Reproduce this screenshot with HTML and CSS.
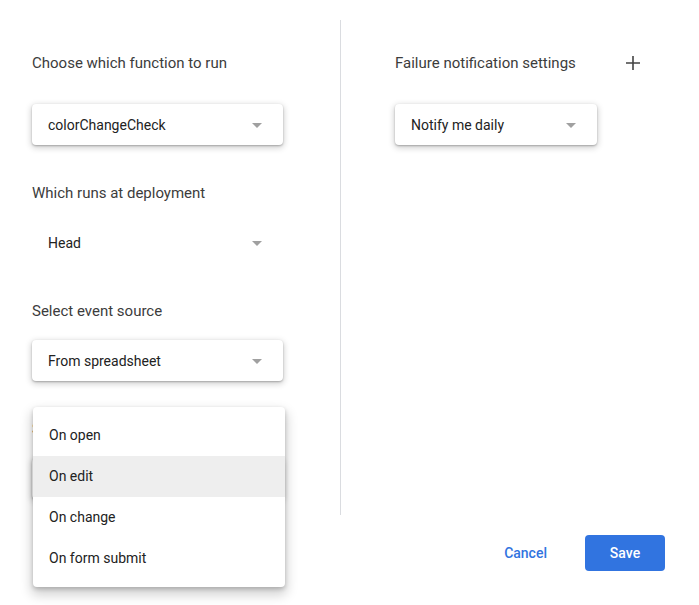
FILE: index.html
```html
<!DOCTYPE html>
<html lang="en">
<head>
  <meta charset="UTF-8">
  <title>Add Trigger</title>
  <link rel="stylesheet" href="styles.css">
</head>
<body>
  <div class="dialog">
    <div class="columns">
      <!-- Left column: function and event settings -->
      <div class="col col-left">
        <div class="header">
          <span class="field-label">Choose which function to run</span>
        </div>
        <div class="select raised">
          <span>colorChangeCheck</span>
          <span class="arrow"></span>
        </div>

        <div class="field-label spaced">Which runs at deployment</div>
        <div class="select">
          <span>Head</span>
          <span class="arrow"></span>
        </div>

        <div class="field-label spaced">Select event source</div>
        <div class="select raised">
          <span>From spreadsheet</span>
          <span class="arrow"></span>
        </div>

        <div class="field-label spaced">Select event type</div>
        <div class="select raised">
          <span>On edit</span>
          <span class="arrow"></span>
        </div>
      </div>

      <!-- Right column: notifications -->
      <div class="col col-right">
        <div class="header header-wide">
          <span class="field-label">Failure notification settings</span>
          <span class="plus">
            <svg width="14" height="14" viewBox="0 0 14 14"><path d="M7 0v14M0 7h14" stroke="#444" stroke-width="1.6"/></svg>
          </span>
        </div>
        <div class="select raised select-short">
          <span>Notify me daily</span>
          <span class="arrow"></span>
        </div>
      </div>
    </div>

    <div class="footer">
      <button class="btn btn-text">Cancel</button>
      <button class="btn btn-primary">Save</button>
    </div>

    <!-- Open dropdown menu for event type -->
    <ul class="menu">
      <li>On open</li>
      <li class="active">On edit</li>
      <li>On change</li>
      <li>On form submit</li>
    </ul>
  </div>
</body>
</html>
```

FILE: styles.css
```css
/* Variables */
:root {
  --text-color: #333;
  --label-color: #3c3c3c;
  --divider: #dadce0;
  --blue: #3174e0;
  --radius: 4px;
}

body {
  margin: 0;
  background: #fff;
  font-family: Roboto, 'Noto Sans', sans-serif;
  color: var(--text-color);
}

.dialog {
  position: relative;
  box-sizing: border-box;
  width: 699px;
  height: 605px;
  padding-top: 20px;
}

.columns {
  display: flex;
  height: 495px;
}

.col {
  box-sizing: border-box;
  padding-top: 23px;
}

.col-left {
  width: 341px;
  padding-left: 32px;
  border-right: 1px solid var(--divider);
}

.col-right {
  padding-left: 54px;
}

.header {
  height: 40px;
  display: flex;
  align-items: center;
  margin-bottom: 21px;
}

.header-wide {
  width: 245px;
  justify-content: space-between;
}

.field-label {
  font-size: 15px;
  line-height: 20px;
  color: var(--label-color);
}

.field-label.spaced {
  margin-top: 38px;
  margin-bottom: 19px;
}

.plus {
  display: flex;
  width: 14px;
  height: 14px;
}

/* Select boxes */
.select {
  box-sizing: border-box;
  width: 251px;
  height: 41px;
  display: flex;
  align-items: center;
  justify-content: space-between;
  padding: 0 21px 0 16px;
  font-size: 14px;
  color: #222;
  border-radius: var(--radius);
  background: #fff;
}

.select.raised {
  box-shadow: 0 1px 2px rgba(0, 0, 0, 0.25), 0 2px 6px 1px rgba(0, 0, 0, 0.18);
}

.select-short {
  width: 202px;
  padding-right: 21px;
}

.arrow {
  width: 0;
  height: 0;
  border-left: 5.5px solid transparent;
  border-right: 5.5px solid transparent;
  border-top: 5px solid #a0a0a0;
  margin-top: 1px;
}

/* Footer buttons */
.footer {
  display: flex;
  justify-content: flex-end;
  align-items: center;
  gap: 22px;
  padding: 20px 34px 0 0;
}

.btn {
  font-family: Roboto, sans-serif;
  font-size: 14px;
  font-weight: 500;
  height: 36px;
  border: none;
  border-radius: var(--radius);
  cursor: pointer;
}

.btn-text {
  background: none;
  color: var(--blue);
  padding: 0 16px;
}

.btn-primary {
  width: 80px;
  background: var(--blue);
  color: #fff;
}

/* Dropdown menu */
.menu {
  position: absolute;
  top: 407px;
  left: 33px;
  width: 252px;
  margin: 0;
  padding: 8px 0;
  list-style: none;
  background: #fff;
  border-radius: var(--radius);
  box-shadow: 0 2px 4px rgba(0, 0, 0, 0.2), 0 6px 12px 2px rgba(0, 0, 0, 0.18);
}

.menu li {
  height: 41px;
  line-height: 41px;
  padding-left: 16px;
  font-size: 14px;
  color: #222;
}

.menu li.active {
  background: #eeeeee;
}
```
